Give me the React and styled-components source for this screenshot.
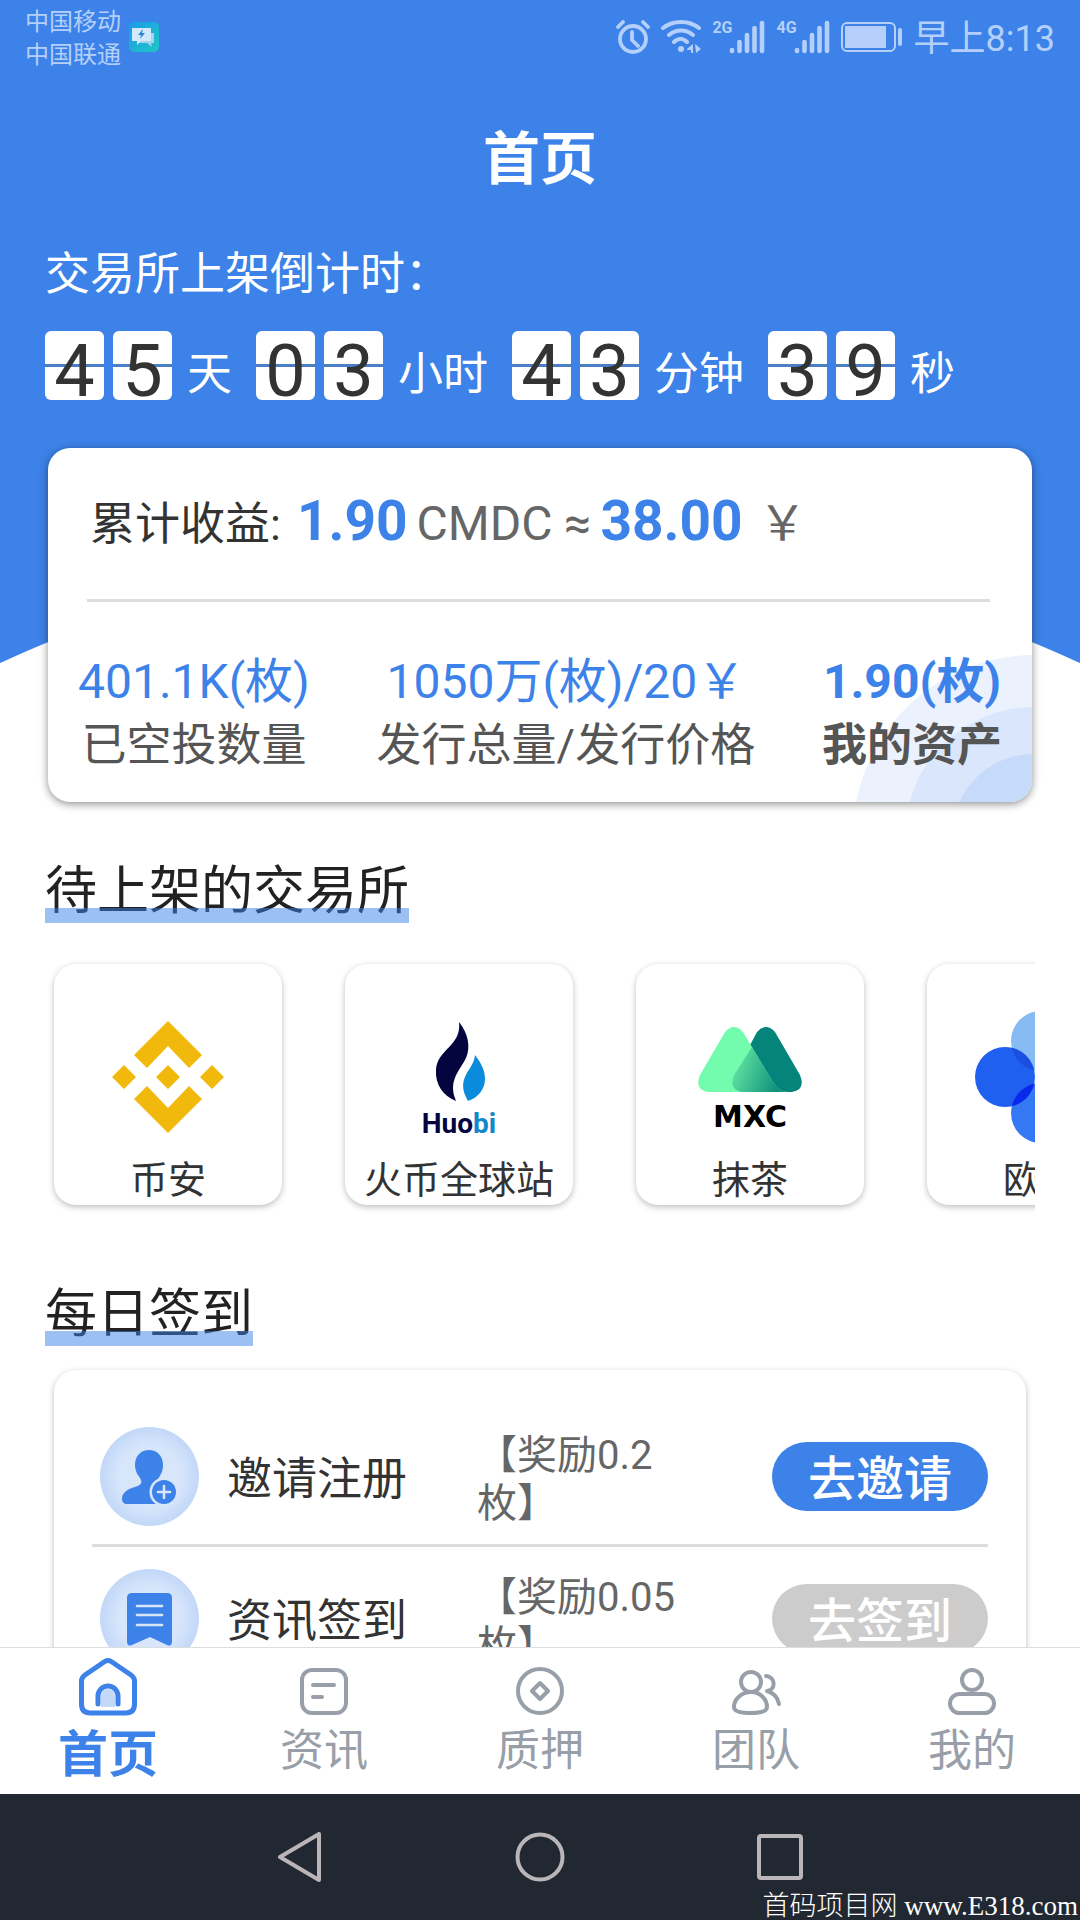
import { useState } from 'react';
import styled, { createGlobalStyle } from 'styled-components';

const BLUE = '#3c82e9';

const GlobalStyle = createGlobalStyle`
  * {
    box-sizing: border-box;
  }
  body {
    margin: 0;
    background: #fff;
    font-family: Roboto, "Noto Sans CJK SC", sans-serif;
  }
  h1, h2, p {
    margin: 0;
    font-weight: 400;
  }
  button {
    border: 0;
    padding: 0;
    background: none;
    font-family: inherit;
    cursor: pointer;
  }
`
// 页面外框
const Screen = styled.div`
  height: 100vh;
  display: flex;
  flex-direction: column;
  overflow: hidden;
`
// 可滚动内容，蓝色背景底部是弧形
const Content = styled.main`
  flex: 1;
  min-height: 0;
  overflow-y: auto;
  scrollbar-width: none;
  background: radial-gradient(circle at 50% 1833px, #fff 1288px, ${BLUE} 1289px);
`
// 状态栏
const StatusBar = styled.div`
  height: 74px;
  padding: 0 25px;
  display: flex;
  align-items: center;
  justify-content: space-between;
  color: #b4d0fa;
`
const StatusGroup = styled.div`
  display: flex;
  align-items: center;
  gap: ${(props) => props.$gap}px;
`
const Carriers = styled.div`
  padding-top: 4px;
  font-size: 24px;
  line-height: 33px;
`
const Signal = styled.span`
  display: flex;
  align-items: flex-start;
  font-size: 16px;
  line-height: 16px;
  font-weight: 700;

  svg {
    margin-left: -3px;
  }
`
const Clock = styled.span`
  padding-top: 4px;
  font-size: 36px;
  line-height: 40px;
`
const PageTitle = styled.h1`
  margin-top: 46px;
  font-size: 57px;
  line-height: 80px;
  font-weight: 700;
  text-align: center;
  color: #fff;
`
// 倒计时
const CountdownLabel = styled.p`
  margin: 45px 45px 0;
  font-size: 45px;
  line-height: 60px;
  color: #fff;
`
const Countdown = styled.div`
  height: 69px;
  margin: 26px 45px 0;
  display: flex;
  gap: 24px;
`
const CountUnit = styled.div`
  display: flex;
  gap: 9px;
`
const Digit = styled.span`
  width: 59px;
  height: 69px;
  padding-top: 6px;
  border-radius: 6px;
  background: linear-gradient(#fff 33px, #4a7fc8 33px, #4a7fc8 36px, #fff 36px);
  font-size: 72px;
  line-height: 69px;
  text-align: center;
  color: #333;
`
const UnitName = styled.span`
  padding: 14px 0 0 6px;
  font-size: 45px;
  line-height: 60px;
  color: #fff;
`
// 收益卡片
const AssetCard = styled.section`
  position: relative;
  margin: 48px 48px 0;
  padding: 43px 0 26px;
  border-radius: 22px;
  background: #fff;
  box-shadow: 0 2px 8px rgba(0, 0, 0, 0.45);
`
const Ripple = styled.svg`
  position: absolute;
  right: 0;
  bottom: 0;
  border-bottom-right-radius: 22px;
`
const Income = styled.div`
  height: 62px;
  padding: 0 42px;
  display: flex;
  align-items: baseline;
  font-size: 45px;
  line-height: 60px;
  color: #333;
`
const IncomeValue = styled.strong`
  margin-left: ${(props) => props.$gap}px;
  font-size: 55px;
  line-height: 60px;
  color: ${BLUE};
`
const IncomeUnit = styled.span`
  margin-left: ${(props) => props.$gap}px;
  font-size: 48px;
  color: #666;
`
const Divider = styled.hr`
  height: 3px;
  margin: 46px 42px 0 39px;
  border: 0;
  background: #ddd;
`
const Stats = styled.div`
  position: relative;
  margin-top: 50px;
  padding: 0 30px;
  display: flex;
  justify-content: space-between;
`
const Stat = styled.div`
  display: flex;
  flex-direction: column;
  align-items: center;
  gap: 4px;
  line-height: 60px;
  white-space: nowrap;
  font-weight: ${(props) => (props.$bold ? 700 : 400)};
`
const StatValue = styled.span`
  font-size: 48px;
  color: ${BLUE};
`
const StatName = styled.span`
  font-size: 45px;
  color: #555;
`
// 带下划线的小标题
const SectionTitle = styled.h2`
  position: relative;
  width: fit-content;
  margin: 53px 45px 0;
  padding-top: 6px;
  font-size: 52px;
  line-height: 62px;
  color: #222;

  &::after {
    content: '';
    position: absolute;
    left: 0;
    right: 0;
    bottom: 0;
    height: 15px;
    background: ${BLUE};
    opacity: 0.5;
  }
`
// 交易所横向列表
const ExchangeList = styled.div`
  margin: 21px 45px 0;
  padding: 20px 9px;
  display: flex;
  gap: 63px;
  overflow-x: auto;
  scrollbar-width: none;
`
const ExchangeCard = styled.div`
  flex: 0 0 228px;
  padding-top: 43px;
  display: flex;
  flex-direction: column;
  align-items: center;
  gap: 8px;
  border-radius: 22px;
  background: #fff;
  box-shadow: 0 2px 6px rgba(0, 0, 0, 0.26);
  font-size: 38px;
  line-height: 50px;
  color: #333;
`
// 每日签到
const TaskCard = styled.section`
  margin: 24px 54px 0;
  padding: 35px 38px;
  border-radius: 22px;
  background: #fff;
  box-shadow: 0 2px 6px rgba(0, 0, 0, 0.26);
`
const TaskRow = styled.div`
  height: 142px;
  padding: 4px 0 0 8px;
  display: flex;
  align-items: center;
  border-bottom: 3px solid #ddd;
`
const TaskName = styled.span`
  width: 250px;
  padding: 6px 0 0 28px;
  font-size: 45px;
  line-height: 60px;
  color: #333;
`
const Reward = styled.span`
  width: 220px;
  margin-left: 28px;
  padding-top: 6px;
  font-size: 40px;
  line-height: 48px;
  color: #666;
`
const TaskButton = styled.button`
  width: 216px;
  height: 69px;
  padding-top: 6px;
  margin-left: auto;
  border-radius: 35px;
  background: ${(props) => (props.disabled ? '#ccc' : BLUE)};
  font-size: 48px;
  line-height: 63px;
  font-weight: 500;
  color: #fff;
`
// 底部标签栏
const TabBar = styled.nav`
  height: 147px;
  display: flex;
  border-top: 1px solid #ddd;
  background: #fff;
`
const Tab = styled.button`
  flex: 1;
  padding-top: 10px;
  display: flex;
  flex-direction: column;
  align-items: center;
  gap: 5px;
  font-size: ${(props) => (props.$active ? 50 : 44)}px;
  line-height: ${(props) => (props.$active ? 68 : 60)}px;
  font-weight: ${(props) => (props.$active ? 700 : 400)};
  color: ${(props) => (props.$active ? BLUE : '#999fa8')};
`
// 系统导航栏
const SystemNav = styled.div`
  position: relative;
  height: 126px;
  padding: 0 180px;
  display: flex;
  align-items: center;
  background: #222831;
`
const SystemButton = styled.button`
  flex: 1;
  display: flex;
  justify-content: center;
`
const Watermark = styled.span`
  position: absolute;
  right: 2px;
  bottom: 0;
  font-family: "Liberation Serif", "Noto Sans CJK SC", serif;
  font-size: 27px;
  line-height: 28px;
  font-weight: 300;
  color: #fff;
`

function MessageIcon() {
  return (
    <svg width="30" height="30" viewBox="0 0 30 30">
      <defs>
        <linearGradient id="msg" x1="0" y1="0" x2="1" y2="1">
          <stop offset="0" stopColor="#1b9be8" />
          <stop offset="1" stopColor="#1fc6c4" />
        </linearGradient>
      </defs>
      <rect width="30" height="30" rx="5" fill="url(#msg)" />
      <path d="M9 11h16v10h-3l1 4-5-4H9z" fill="#a5d3ee" />
      <path d="M3 6h19v13H12l-4 4v-4H3z" fill="#d3e8fa" />
      <path d="M14 7l-5 6h3l-1 4 5-6h-3z" fill="#2a86d8" />
    </svg>
  )
}

function AlarmIcon() {
  return (
    <svg width="34" height="34" viewBox="0 0 34 34" fill="none" stroke="currentColor" strokeWidth="3.8" strokeLinecap="round">
      <circle cx="17" cy="19" r="13" />
      <path d="M16 12v8l6 6M2 7l5-5M32 7l-5-5" />
    </svg>
  )
}

function WifiIcon() {
  return (
    <svg width="40" height="34" viewBox="0 0 40 34" fill="none" stroke="currentColor" strokeWidth="4" strokeLinecap="round">
      <path d="M2 8c10-8 26-8 36 0M8 15c7-6 17-6 24 0M13 22c4-4 9-4 13 0" />
      <circle cx="20" cy="29" r="3" fill="currentColor" stroke="none" />
      <path d="M26 29l6-5v9h-2v-3h-4zM34 24l6 5-5 4z" fill="currentColor" stroke="none" />
    </svg>
  )
}

function SignalIcon() {
  return (
    <svg width="36" height="34" viewBox="0 0 36 34" stroke="currentColor" strokeWidth="4.6" strokeLinecap="round">
      <path d="M3 30v1M10.500 22v9M18 15v16M25.500 8v23M33 3v28" />
    </svg>
  )
}

function BatteryIcon() {
  return (
    <svg width="62" height="30" viewBox="0 0 62 30">
      <rect x="1" y="1" width="53" height="28" rx="5" fill="none" stroke="currentColor" strokeWidth="2" />
      <rect x="4" y="4" width="41" height="22" fill="currentColor" />
      <rect x="57" y="6" width="4" height="18" rx="2" fill="currentColor" />
    </svg>
  )
}

function BinanceLogo() {
  return (
    <svg width="140" height="140" viewBox="-70 -70 140 140" fill="#f0b90b">
      <path d="M0-56L34-22 21-9 0-31-21-9-34-22zM0 56L34 22 21 9 0 31-21 9-34 22z" />
      <path d="M0-12L12 0 0 12-12 0zM-44-12L-32 0-44 12-56 0zM44-12L56 0 44 12 32 0z" />
    </svg>
  )
}

function HuobiLogo() {
  return (
    <svg width="140" height="140" viewBox="0 0 140 140">
      <path d="M70 15c9 11 12 25 7 36-5 10-13 18-13 30 0 6 2 10 3 13-13-5-21-17-20-31 1-21 26-24 23-48z" fill="#04043f" />
      <path d="M86 48c6 8 10 15 10 24 0 10-7 19-17 22-4-7-7-15-3-24 3-8 9-12 10-22z" fill="#0b8bdb" />
      <text x="70" y="126" textAnchor="middle" fontFamily="Roboto, sans-serif" fontSize="28" fontWeight="700" fill="#04043f">
        Huo<tspan fill="#1287c9">bi</tspan>
      </text>
    </svg>
  )
}

function MxcLogo() {
  return (
    <svg width="140" height="140" viewBox="0 0 140 140">
      <defs>
        <linearGradient id="mxc" x1="0" y1="0" x2="1" y2="0.3">
          <stop offset="0" stopColor="#6df0a6" />
          <stop offset="1" stopColor="#0f8f7c" />
        </linearGradient>
      </defs>
      <path d="M77 25q9-10 18 0l25 43q6 15-8 17H62q-14-3-8-17z" fill="#04847a" />
      <path d="M45 25q9-10 18 0l31 52q6 8 14 8H28q-14-2-8-17z" fill="#74fcae" />
      <path d="M72 40l22 37q6 8 14 8H62q-14-3-8-17z" fill="url(#mxc)" />
      <text x="70" y="120" textAnchor="middle" fontFamily="DejaVu Sans, sans-serif" fontSize="30" fontWeight="700" fill="#000">MXC</text>
    </svg>
  )
}

function OkexLogo() {
  return (
    <svg width="140" height="140" viewBox="0 0 140 140">
      <defs>
        <clipPath id="okLeft"><circle cx="34" cy="70" r="30" /></clipPath>
      </defs>
      <circle cx="106" cy="70" r="30" fill="#2262f0" />
      <circle cx="70" cy="34" r="30" fill="#87bbf3" />
      <circle cx="70" cy="106" r="30" fill="#3478f3" />
      <circle cx="34" cy="70" r="30" fill="#2060f0" />
      <g clipPath="url(#okLeft)">
        <circle cx="70" cy="34" r="30" fill="#1a4fe0" />
        <circle cx="70" cy="106" r="30" fill="#0828ec" />
      </g>
    </svg>
  )
}

function AvatarCircle({ id, children }) {
  return (
    <svg width="99" height="99" viewBox="0 0 99 99">
      <defs>
        <radialGradient id={id}>
          <stop offset="0.6" stopColor="#d8e6fb" />
          <stop offset="1" stopColor="#c2d8f8" />
        </radialGradient>
      </defs>
      <circle cx="49.5" cy="49.5" r="49.5" fill={`url(#${id})`} />
      {children}
    </svg>
  )
}

function InviteIcon() {
  return (
    <AvatarCircle id="invite">
      <path d="M49 23c8 0 14 6 14 15 0 7-3 11-5 14-2 4-1 7 2 9l-2 16H27c-3 0-5-2-5-5 0-7 6-10 13-12 6-2 8-4 5-9-2-3-5-7-5-13 0-9 6-15 14-15z" fill={BLUE} />
      <circle cx="64" cy="65" r="14.500" fill="#d8e6fb" />
      <circle cx="64" cy="65" r="12" fill={BLUE} />
      <path d="M64 59v12M58 65h12" stroke="#d8e6fb" strokeWidth="2.600" strokeLinecap="round" />
    </AvatarCircle>
  )
}

function NewsSignIcon() {
  return (
    <AvatarCircle id="newsSign">
      <path d="M32 24h35q5 0 5 5v43q0 6-5 4l-17-8-18 8q-5 2-5-4V29q0-5 5-5z" fill={BLUE} />
      <path d="M37 37h25M37 46h25M37 56h25" stroke="#d8e6fb" strokeWidth="2.600" strokeLinecap="round" />
    </AvatarCircle>
  )
}

// 标签栏图标都画在 58 的方框里
function TabIcon({ children }) {
  return (
    <svg width="58" height="58" viewBox="0 0 58 58" fill="none" stroke="currentColor" strokeWidth="4" strokeLinecap="round" strokeLinejoin="round">
      {children}
    </svg>
  )
}

const HomeIcon = (
  <TabIcon>
    <path d="M22 49V38a7 7 0 0 1 14 0v11z" fill="#c4d8f8" stroke="none" />
    <path d="M25 4q4-3 8 0l19 13q3.500 2.500 3.500 6v23q0 9-9 9h-35q-9 0-9-9V23q0-3.500 3.500-6z" strokeWidth="5" />
    <path d="M19 46V38a10 10 0 0 1 20 0v8" strokeWidth="5" />
  </TabIcon>
)
const NewsIcon = (
  <TabIcon>
    <rect x="7" y="12" width="44" height="43" rx="10" />
    <path d="M18 27h21M18 39h9" />
  </TabIcon>
)
const PledgeIcon = (
  <TabIcon>
    <circle cx="29" cy="33" r="22" />
    <path d="M29 25l8 8-8 8-8-8z" />
  </TabIcon>
)
const TeamIcon = (
  <TabIcon>
    <circle cx="24" cy="24" r="10" />
    <path d="M24 34c9 0 16 7 16 15 0 5-7 6-16 6S7 54 7 49c0-8 8-15 17-15z" />
    <path d="M39 18c10 1 10 14 1 15 7 2 11 7 12 13" />
  </TabIcon>
)
const MeIcon = (
  <TabIcon>
    <circle cx="29" cy="22" r="10" />
    <rect x="7" y="36" width="44" height="19" rx="9.500" />
  </TabIcon>
)

const countdown = [
  { digits: '45', unit: '天' },
  { digits: '03', unit: '小时' },
  { digits: '43', unit: '分钟' },
  { digits: '39', unit: '秒' },
];

const stats = [
  { value: '401.1K(枚)', name: '已空投数量' },
  { value: '1050万(枚)/20￥', name: '发行总量/发行价格' },
  { value: '1.90(枚)', name: '我的资产', bold: true },
];

const exchanges = [
  { name: '币安', logo: <BinanceLogo /> },
  { name: '火币全球站', logo: <HuobiLogo /> },
  { name: '抹茶', logo: <MxcLogo /> },
  { name: '欧易', logo: <OkexLogo /> },
];

const tasks = [
  { name: '邀请注册', reward: '【奖励0.2枚】', action: '去邀请', icon: <InviteIcon /> },
  { name: '资讯签到', reward: '【奖励0.05枚】', action: '去签到', icon: <NewsSignIcon />, done: true },
];

const tabs = [
  { name: '首页', icon: HomeIcon },
  { name: '资讯', icon: NewsIcon },
  { name: '质押', icon: PledgeIcon },
  { name: '团队', icon: TeamIcon },
  { name: '我的', icon: MeIcon },
];

function App() {
  const [activeTab, setActiveTab] = useState('首页');

  return (
    <Screen>
      <GlobalStyle />
      <Content>
        <StatusBar>
          <StatusGroup $gap={8}>
            <Carriers>
              <div>中国移动</div>
              <div>中国联通</div>
            </Carriers>
            <MessageIcon />
          </StatusGroup>
          <StatusGroup $gap={11}>
            <AlarmIcon />
            <WifiIcon />
            <Signal>2G<SignalIcon /></Signal>
            <Signal>4G<SignalIcon /></Signal>
            <BatteryIcon />
            <Clock>早上8:13</Clock>
          </StatusGroup>
        </StatusBar>

        <PageTitle>首页</PageTitle>
        <CountdownLabel>交易所上架倒计时：</CountdownLabel>
        <Countdown>
          {countdown.map((item) => (
            <CountUnit key={item.unit}>
              {item.digits.split('').map((digit, i) => (
                <Digit key={i}>{digit}</Digit>
              ))}
              <UnitName>{item.unit}</UnitName>
            </CountUnit>
          ))}
        </Countdown>

        <AssetCard>
          <Ripple width="176" height="147" viewBox="856 655 176 147">
            <circle cx="1034" cy="836" r="181" fill="#ebf1fd" />
            <circle cx="1034" cy="836" r="129" fill="#d9e6fb" />
            <circle cx="1034" cy="836" r="82" fill="#c6daf9" />
          </Ripple>
          <Income>
            <span>累计收益:</span>
            <IncomeValue $gap={16}>1.90</IncomeValue>
            <IncomeUnit $gap={9}>CMDC ≈</IncomeUnit>
            <IncomeValue $gap={9}>38.00</IncomeValue>
            <IncomeUnit $gap={16}>￥</IncomeUnit>
          </Income>
          <Divider />
          <Stats>
            {stats.map((stat) => (
              <Stat key={stat.name} $bold={stat.bold}>
                <StatValue>{stat.value}</StatValue>
                <StatName>{stat.name}</StatName>
              </Stat>
            ))}
          </Stats>
        </AssetCard>

        <SectionTitle>待上架的交易所</SectionTitle>
        <ExchangeList>
          {exchanges.map((exchange) => (
            <ExchangeCard key={exchange.name}>
              {exchange.logo}
              <span>{exchange.name}</span>
            </ExchangeCard>
          ))}
        </ExchangeList>

        <SectionTitle>每日签到</SectionTitle>
        <TaskCard>
          {tasks.map((task) => (
            <TaskRow key={task.name}>
              {task.icon}
              <TaskName>{task.name}</TaskName>
              <Reward>{task.reward}</Reward>
              <TaskButton type="button" disabled={task.done}>{task.action}</TaskButton>
            </TaskRow>
          ))}
        </TaskCard>
      </Content>

      <TabBar>
        {tabs.map((tab) => (
          <Tab
            key={tab.name}
            type="button"
            $active={tab.name === activeTab}
            onClick={() => setActiveTab(tab.name)}>
            {tab.icon}
            <span>{tab.name}</span>
          </Tab>
        ))}
      </TabBar>

      <SystemNav>
        <SystemButton type="button" aria-label="返回">
          <svg width="50" height="50" viewBox="0 0 50 50" fill="none" stroke="#b9b5b8" strokeWidth="4" strokeLinejoin="round">
            <path d="M44 2v46L5 25z" />
          </svg>
        </SystemButton>
        <SystemButton type="button" aria-label="主屏幕">
          <svg width="50" height="50" viewBox="0 0 50 50" fill="none" stroke="#b9b5b8" strokeWidth="4">
            <circle cx="25" cy="25" r="22.500" />
          </svg>
        </SystemButton>
        <SystemButton type="button" aria-label="最近任务">
          <svg width="50" height="50" viewBox="0 0 50 50" fill="none" stroke="#b9b5b8" strokeWidth="4">
            <rect x="4" y="4" width="42" height="42" rx="2" />
          </svg>
        </SystemButton>
        <Watermark>首码项目网 www.E318.com</Watermark>
      </SystemNav>
    </Screen>
  )
}

export default App
